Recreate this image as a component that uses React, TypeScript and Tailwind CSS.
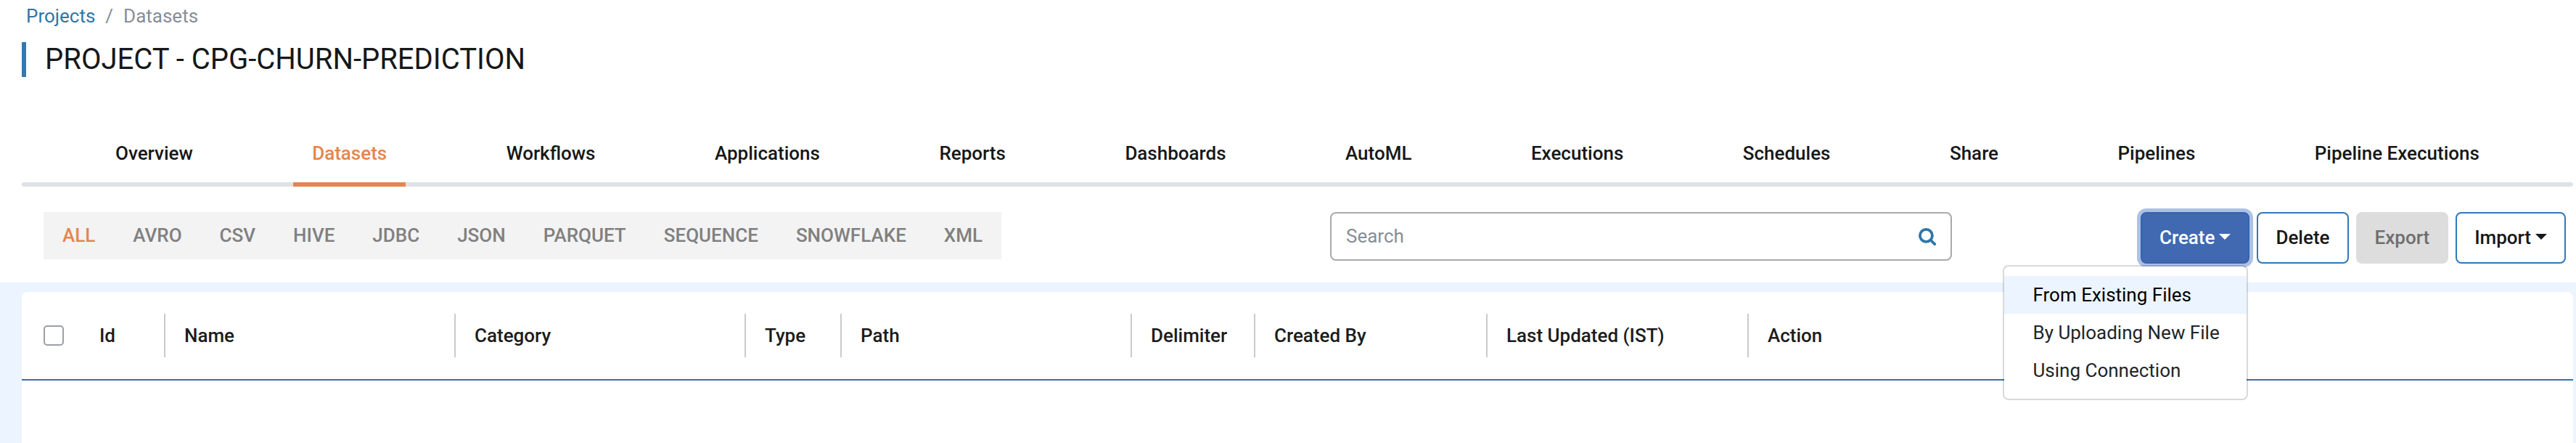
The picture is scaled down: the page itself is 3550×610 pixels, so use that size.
import { useState } from "react";

const tabs = [
  "Overview",
  "Datasets",
  "Workflows",
  "Applications",
  "Reports",
  "Dashboards",
  "AutoML",
  "Executions",
  "Schedules",
  "Share",
  "Pipelines",
  "Pipeline Executions",
];

const formats = [
  "ALL",
  "AVRO",
  "CSV",
  "HIVE",
  "JDBC",
  "JSON",
  "PARQUET",
  "SEQUENCE",
  "SNOWFLAKE",
  "XML",
];

const createOptions = ["From Existing Files", "By Uploading New File", "Using Connection"];

const columns = [
  { label: "Name", width: "w-[400px]" },
  { label: "Category", width: "w-[400px]" },
  { label: "Type", width: "w-[132px]" },
  { label: "Path", width: "w-[400px]" },
  { label: "Delimiter", width: "w-[170px]" },
  { label: "Created By", width: "w-[320px]" },
  { label: "Last Updated (IST)", width: "w-[360px]" },
  { label: "Action", width: "" },
];

function Caret() {
  return (
    <svg aria-hidden="true" viewBox="0 0 16 8" className="mb-1 h-2 w-4 fill-current">
      <path d="M0 0h16L8 8z" />
    </svg>
  );
}

function SearchIcon() {
  return (
    <svg
      aria-hidden="true"
      viewBox="0 0 24 24"
      className="size-6 fill-none stroke-[#2f76a6]"
      strokeWidth="3.8"
      strokeLinecap="round"
    >
      <circle cx="10.4" cy="10.4" r="8.5" />
      <path d="M17 17l5.2 5.2" />
    </svg>
  );
}

function CreateMenu() {
  const [open, setOpen] = useState(true);
  const [active, setActive] = useState(0);

  return (
    <div className="relative">
      <button
        type="button"
        aria-haspopup="menu"
        aria-expanded={open}
        onClick={() => setOpen(!open)}
        className="flex h-[71px] items-center gap-[6px] rounded-lg border-2 border-[#3a62a8] bg-[#4069b1] px-6 font-medium text-white shadow-[0_0_0_5px_#abc1e6]"
      >
        Create
        <Caret />
      </button>
      {open && (
        <ul
          role="menu"
          className="absolute top-[73px] right-[2px] z-10 w-[338px] rounded-lg border-2 border-black/15 bg-white bg-clip-padding pt-[13px] pb-[13px] text-[#212529]"
        >
          {createOptions.map((option, i) => (
            <li key={option} role="none">
              <button
                type="button"
                role="menuitem"
                onMouseEnter={() => setActive(i)}
                className={`block h-[52px] w-full px-[39px] text-left whitespace-nowrap ${
                  active === i ? "bg-[#ebf4ff] text-black" : ""
                }`}
              >
                {option}
              </button>
            </li>
          ))}
        </ul>
      )}
    </div>
  );
}

export default function App() {
  const [tab, setTab] = useState("Datasets");
  const [format, setFormat] = useState("ALL");

  return (
    <div className="flex min-h-screen flex-col bg-white font-[Roboto,sans-serif] text-[26px] leading-[39px] text-[#161819]">
      <header className="px-[30px] pt-[3px]">
        <nav aria-label="Breadcrumb" className="flex gap-[14px] pl-[6px] text-[#868e96]">
          <a href="#projects" className="text-[#2f76a6]">
            Projects
          </a>
          <span>/</span>
          <span aria-current="page">Datasets</span>
        </nav>
        <h1 className="mt-4 border-l-[6px] border-[#3377b5] pl-[26px] text-[40px] leading-[48px]">
          PROJECT - CPG-CHURN-PREDICTION
        </h1>
      </header>

      <nav aria-label="Project sections" className="mt-[78px] ml-[30px] mr-1">
        <ul className="flex justify-between px-[103px]">
          {tabs.map((name) => (
            <li key={name}>
              <button
                type="button"
                aria-current={tab === name ? "page" : undefined}
                onClick={() => setTab(name)}
                className={`relative block h-[67px] px-[26px] pb-[13px] font-medium whitespace-nowrap ${
                  tab === name
                    ? "text-[#e5854d] after:absolute after:inset-x-0 after:-bottom-[6px] after:h-[6px] after:bg-[#e5854d]"
                    : ""
                }`}
              >
                {name}
              </button>
            </li>
          ))}
        </ul>
        <div className="h-[6px] rounded-full bg-[#dee2e6]" />
      </nav>

      <div className="mt-[35px] mb-[26px] ml-[60px] mr-[14px] flex items-start">
        <div className="flex flex-1">
          <div role="group" aria-label="Format" className="flex bg-[#f3f3f3]">
            {formats.map((name) => (
              <button
                key={name}
                type="button"
                aria-pressed={format === name}
                onClick={() => setFormat(name)}
                className={`h-[65px] px-[26px] font-medium ${
                  format === name ? "text-[#e5854d]" : "text-[#808080]"
                }`}
              >
                {name}
              </button>
            ))}
          </div>
        </div>
        <form
          role="search"
          onSubmit={(e) => e.preventDefault()}
          className="flex h-[67px] w-[857px] items-center rounded-lg border-2 border-[#aaaaaa] px-5"
        >
          <input
            type="search"
            aria-label="Search"
            placeholder="Search"
            className="min-w-0 flex-1 outline-none placeholder:text-[#868e96]"
          />
          <button type="submit" aria-label="Search">
            <SearchIcon />
          </button>
        </form>
        <div className="ml-[260px] flex gap-[10px]">
          <CreateMenu />
          <button
            type="button"
            className="h-[71px] rounded-lg border-2 border-[#3377b5] bg-white px-6 font-medium"
          >
            Delete
          </button>
          <button
            type="button"
            disabled
            className="h-[71px] rounded-lg border-2 border-[#dddddd] bg-[#dddddd] px-6 font-medium text-[#6e6e6e]"
          >
            Export
          </button>
          <button
            type="button"
            aria-haspopup="menu"
            className="flex h-[71px] items-center gap-[6px] rounded-lg border-2 border-[#3377b5] bg-white px-6 font-medium"
          >
            Import
            <Caret />
          </button>
        </div>
      </div>

      <main className="flex flex-1 flex-col bg-[#ebf4ff] pt-[13px] pr-1 pl-[30px]">
        <div className="flex-1 rounded-t-lg bg-white">
          <table className="w-full table-fixed border-separate border-spacing-0 border-b-2 border-[#35749f] text-[#1c1c1c]">
            <thead>
              <tr className="h-[120px] text-left">
                <th className="w-[107px] pl-[30px]">
                  <input
                    type="checkbox"
                    aria-label="Select all datasets"
                    className="block size-7 appearance-none rounded-[5px] border-2 border-[#9aa0a6] bg-white checked:bg-[#3377b5]"
                  />
                </th>
                <th scope="col" className="w-[89px] font-medium">
                  Id
                </th>
                {columns.map(({ label, width }) => (
                  <th key={label} scope="col" className={`font-medium ${width}`}>
                    <div className="flex h-[60px] items-center border-l-2 border-[#cacaca] pl-[26px] whitespace-nowrap">
                      {label}
                    </div>
                  </th>
                ))}
              </tr>
            </thead>
            <tbody />
          </table>
        </div>
      </main>
    </div>
  );
}
